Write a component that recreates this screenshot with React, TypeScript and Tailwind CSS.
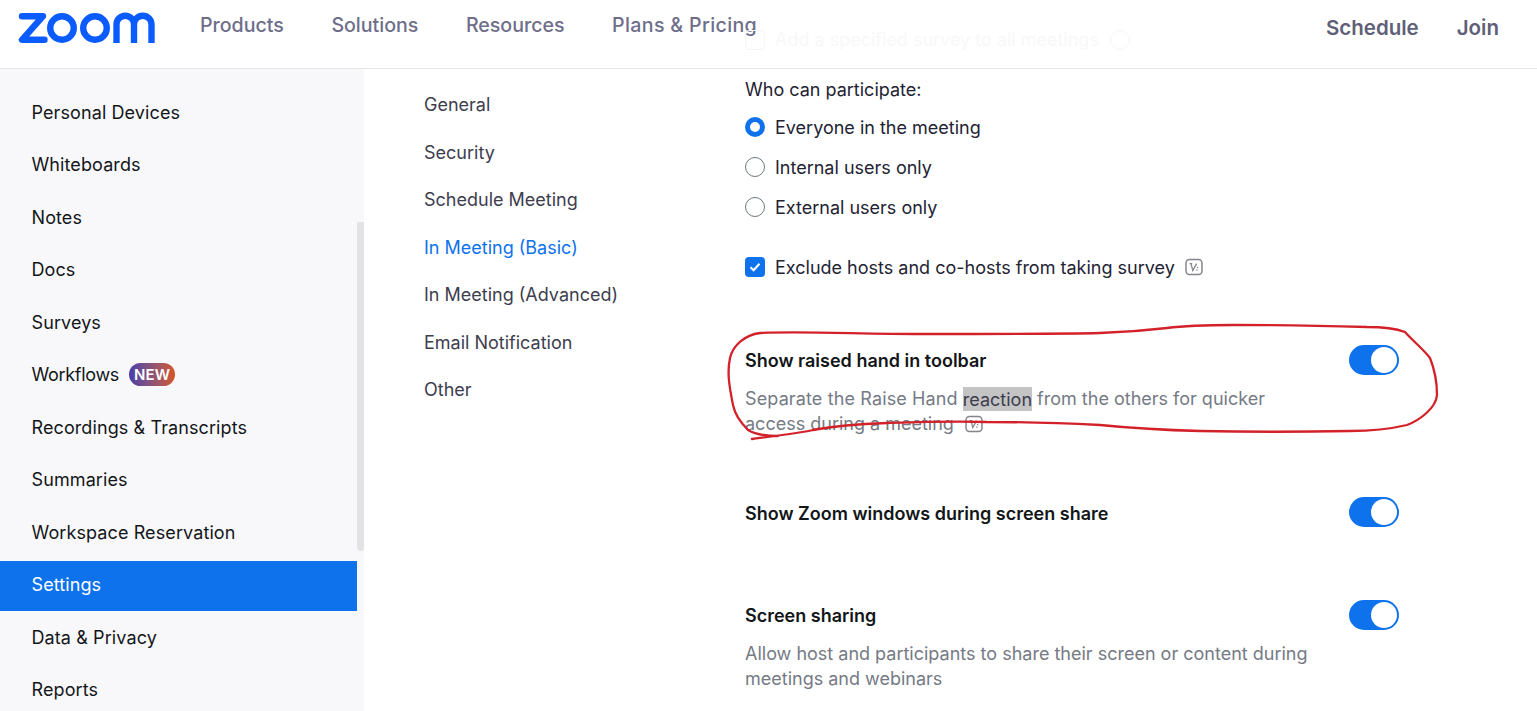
const sidebarItems = [
  'Personal Devices',
  'Whiteboards',
  'Notes',
  'Docs',
  'Surveys',
  'Workflows',
  'Recordings & Transcripts',
  'Summaries',
  'Workspace Reservation',
  'Settings',
  'Data & Privacy',
  'Reports',
];

const subNavItems = ['General', 'Security', 'Schedule Meeting', 'In Meeting (Basic)', 'In Meeting (Advanced)', 'Email Notification', 'Other'];

function ZoomLogo() {
  return (
    <svg width="138" height="32" viewBox="18 11 138 32" fill="none" stroke="#0b5cff" strokeWidth="6.4" className="mb-[2px]">
      <path d="M22 15.2H43L22 38.8H44.5" strokeLinejoin="round" strokeLinecap="round" />
      <circle cx="62" cy="27" r="11.8" />
      <circle cx="95" cy="27" r="11.8" />
      <path d="M116.5 42V23.5A8.75 8.75 0 0 1 134 23.5V42M134 23.5A8.75 8.75 0 0 1 151.5 23.5V42" />
    </svg>
  );
}

// small "V:" badge next to setting labels
function VersionIcon() {
  return (
    <svg width="18" height="18" viewBox="0 0 18 18" fill="none" className="shrink-0">
      <rect x="1" y="1.5" width="16" height="15" rx="3.5" stroke="#85858c" strokeWidth="1.5" />
      <path d="M4.6 5.6H7.2M6 5.6L7.8 12.6L11.6 5.6" stroke="#85858c" strokeWidth="1.3" />
      <path d="M12.6 9V10.2M11.9 11.6V12.8" stroke="#85858c" strokeWidth="1.3" />
    </svg>
  );
}

function Toggle() {
  return (
    <div className="flex h-[30px] w-[50px] shrink-0 items-center justify-end rounded-full bg-[#0e72ed] pr-[2px]">
      <div className="h-[26px] w-[26px] rounded-full bg-white" />
    </div>
  );
}

function Radio({ label, checked }: { label: string; checked?: boolean }) {
  return (
    <div className="flex h-[40px] items-center gap-[10px] text-[18px] text-[#232333]">
      {checked ? (
        <div className="h-5 w-5 rounded-full border-[5.5px] border-[#0e72ed] bg-white" />
      ) : (
        <div className="h-5 w-5 rounded-full border border-[#6e7680] bg-white" />
      )}
      <span>{label}</span>
    </div>
  );
}

function Annotation() {
  return (
    <svg width="1537" height="711" viewBox="0 0 1537 711" fill="none" className="pointer-events-none absolute left-0 top-0">
      <path
        d="M778 436C770 436 758 436 748 430C740 422 735 415 733 405C729 385 727 372 730 358C733 345 745 335 760 333C800 331 860 334 920 334C1000 334 1060 334 1100 333C1130 332 1150 330 1167 328C1190 325 1210 325 1233 325C1280 325 1330 326 1367 327C1385 327 1397 329 1405 332C1412 340 1424 350 1430 358C1434 368 1437 383 1437 395C1436 408 1420 420 1407 425C1390 429 1370 431 1350 431C1300 432 1250 432 1200 431C1160 430 1130 428 1100 425C1060 423 1030 422 987 422C950 421 920 422 887 423C860 424 835 426 813 430C800 433 775 436 752 439"
        stroke="#d3212a"
        strokeWidth="2.3"
        strokeLinecap="round"
      />
    </svg>
  );
}

export default function App() {
  return (
    <div className="relative flex h-[711px] w-[1537px] flex-col overflow-hidden bg-white font-['Inter',sans-serif]">
      {/* top bar */}
      <header className="relative flex h-[69px] shrink-0 items-center justify-between border-b border-[#e6e6ea] pb-[10px] pl-[18px] pr-[38px]">
        <div className="flex items-center">
          <ZoomLogo />
          <nav className="ml-[44px] flex gap-[47.5px] pb-[7px] text-[19.6px] font-medium text-[#6e6e8a]">
            <span>Products</span>
            <span>Solutions</span>
            <span>Resources</span>
            <span className="tracking-[0.35px]">Plans &amp; Pricing</span>
          </nav>
        </div>
        <div className="flex gap-[38px] pb-[2px] text-[20.5px] font-semibold text-[#5f5f78]">
          <span>Schedule</span>
          <span>Join</span>
        </div>
        {/* survey row scrolled under the bar */}
        <div className="absolute left-[745px] top-[26px] flex items-center gap-[10px] text-[18px] text-[#f8f8f9]">
          <div className="h-5 w-5 rounded border border-[#f6f6f8]" />
          <span>Add a specified survey to all meetings</span>
          <div className="ml-[1px] h-5 w-5 rounded-full border border-[#f6f6f8]" />
        </div>
      </header>

      <div className="flex min-h-0 flex-1">
        {/* left sidebar */}
        <aside className="relative w-[364px] shrink-0 bg-[#f8f8fb] pt-[19.5px]">
          <div className="absolute right-0 top-[153px] h-[329px] w-[7px] rounded-b bg-[#e3e3e5]" />
          <ul className="w-[357px] flex flex-col gap-[2.5px]">
            {sidebarItems.map((item) => (
              <li
                key={item}
                className={`flex h-[50px] items-center gap-[10px] pb-[3px] pl-[31.5px] text-[18px] tracking-[0.1px] ${
                  item === 'Settings' ? 'bg-[#0e72ed] text-white' : 'text-[#131619]'
                }`}
              >
                {item === 'Workflows' ? <span className="tracking-[-0.3px]">{item}</span> : item}
                {item === 'Workflows' && (
                  <span className="rounded-full bg-gradient-to-r from-[#4a3aa8] to-[#d4551c] px-[5px] text-[15px] font-semibold leading-[23px] text-white">
                    NEW
                  </span>
                )}
              </li>
            ))}
          </ul>
        </aside>

        {/* settings tabs */}
        <nav className="w-[381px] shrink-0 pl-[60px] pt-[12px] text-[18px] text-[#3d3d4e]">
          {subNavItems.map((item) => (
            <div key={item} className={`flex h-[47.5px] items-center ${item === 'In Meeting (Basic)' ? 'text-[#0e72ed]' : ''}`}>
              {item}
            </div>
          ))}
        </nav>

        {/* settings content */}
        <main className="w-[654px] shrink-0 pt-[8px]">
          <p className="h-[26px] text-[18px] leading-[26px] text-[#232333]">Who can participate:</p>
          <div className="mt-[4px]">
            <Radio label="Everyone in the meeting" checked />
            <Radio label="Internal users only" />
            <Radio label="External users only" />
          </div>
          <div className="mt-[30px] flex h-[20px] items-center gap-[10px] text-[18px] text-[#232333]">
            <div className="flex h-5 w-5 items-center justify-center rounded-[4px] bg-[#0e72ed]">
              <svg width="14" height="14" viewBox="0 0 14 14" fill="none">
                <path d="M2.5 7.2L5.6 10.2L11.5 3.8" stroke="white" strokeWidth="2" />
              </svg>
            </div>
            <span>Exclude hosts and co-hosts from taking survey</span>
            <VersionIcon />
          </div>

          <section className="mt-[68px] flex items-start justify-between">
            <div className="w-[570px]">
              <h3 className="pt-[3px] text-[18px] font-semibold leading-[26px] text-[#131619]">Show raised hand in toolbar</h3>
              <p className="mt-[12px] text-[18px] leading-[25px] text-[#757a85]">
                <span className="tracking-[0.13px]">Separate the Raise Hand</span> <span className="bg-[#c4c4c4] py-[1.5px] text-[#3d3d4e]">reaction</span> from the others for quicker access during a meeting
                <span className="ml-[11px] inline-block align-[-3px]">
                  <VersionIcon />
                </span>
              </p>
            </div>
            <Toggle />
          </section>

          <section className="mt-[61px] flex items-start justify-between">
            <h3 className="pt-[4px] text-[18px] font-semibold leading-[26px] text-[#131619]">Show Zoom windows during screen share</h3>
            <Toggle />
          </section>

          <section className="mt-[73px] flex items-start justify-between">
            <div className="w-[570px]">
              <h3 className="pt-[3px] text-[18px] font-semibold leading-[26px] text-[#131619]">Screen sharing</h3>
              <p className="mt-[12px] text-[18px] leading-[25px] text-[#757a85]">
                Allow host and participants to share their screen or content during meetings and webinars
              </p>
            </div>
            <Toggle />
          </section>
        </main>
      </div>

      <Annotation />
    </div>
  );
}
